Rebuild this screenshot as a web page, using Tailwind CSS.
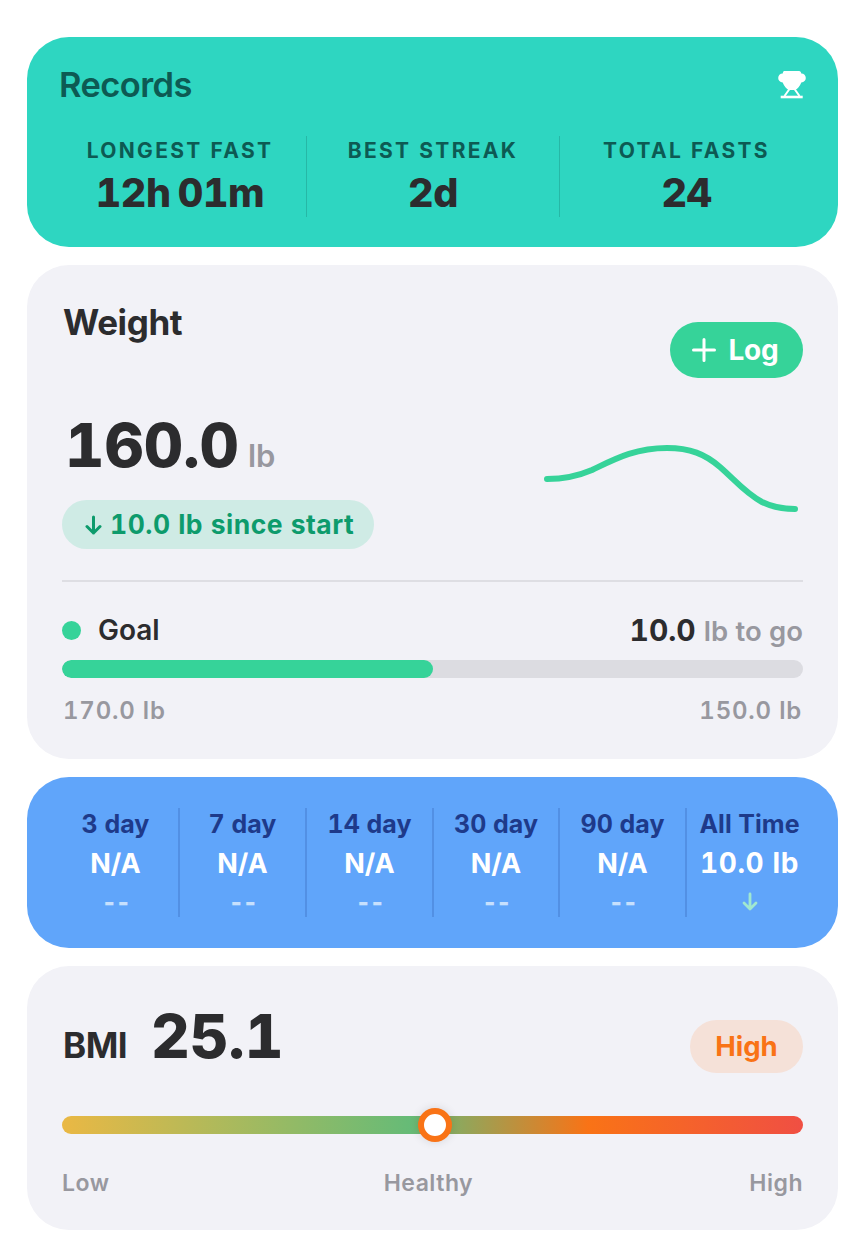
<!DOCTYPE html>
<html>
<head>
<meta charset="utf-8">
<script src="https://cdn.jsdelivr.net/npm/@tailwindcss/browser@4"></script>
</head>
<body class="bg-white font-['Inter',sans-serif] text-[#2c2c2e] tabular-nums">
<div class="w-[860px] h-[1246px] overflow-hidden pt-[37px] pl-[27px] flex flex-col gap-[18px]">

  <section class="w-[811px] h-[210px] rounded-[42px] bg-[#2ed6c1] flex flex-col">
    <div class="flex items-start justify-between pl-[32px] pr-[31px] pt-[29px] h-[78px]">
      <h2 class="text-[34.5px] leading-[38px] font-semibold tracking-[-0.6px] text-[#0d5a53]">Records</h2>
      <svg class="w-[30px] h-[30px] mt-[4px]" viewBox="0 0 30 30" fill="#fff">
        <path d="M7 1H22C23.5 1 24 2 24.3 3.5 27 3.5 28.8 5.5 28.8 8 28.8 10.5 27 12.3 24.3 12.5 23 16 20.5 19 18 20H12C9.5 19 7 16 5.7 12.5 3 12.3 1.2 10.5 1.2 8 1.2 5.5 3 3.5 5.7 3.5 6 2 6.5 1 7 1Z"/>
        <path d="M12.5 19 7.5 26M17.5 19l5 7" stroke="#fff" stroke-width="2" fill="none"/>
        <rect x="3.7" y="25.7" width="22" height="2.6"/>
      </svg>
    </div>
    <div class="grid grid-cols-3 w-[759px] ml-[27px] mt-[21px] h-[81px]">
      <div class="flex flex-col items-center pt-[2px] border-r border-[#0e5f58]/25">
        <span class="text-[21px] leading-[26px] font-bold tracking-[2.3px] text-[#0d5a53]">LONGEST FAST</span>
        <span class="text-[39.5px] leading-[46px] font-extrabold tracking-[-0.4px] [word-spacing:-3px] mt-[6px]">12h 01m</span>
      </div>
      <div class="flex flex-col items-center pt-[2px] border-r border-[#0e5f58]/25">
        <span class="text-[21px] leading-[26px] font-bold tracking-[2.3px] text-[#0d5a53]">BEST STREAK</span>
        <span class="text-[39.5px] leading-[46px] font-extrabold tracking-[-0.4px] mt-[6px]">2d</span>
      </div>
      <div class="flex flex-col items-center pt-[2px]">
        <span class="text-[21px] leading-[26px] font-bold tracking-[2.3px] text-[#0d5a53]">TOTAL FASTS</span>
        <span class="text-[39.5px] leading-[46px] font-extrabold tracking-[-0.4px] mt-[6px]">24</span>
      </div>
    </div>
  </section>

  <section class="w-[811px] h-[494px] rounded-[42px] bg-[#f2f2f7] px-[35px] flex flex-col relative">
    <div class="flex justify-between items-start">
      <h2 class="text-[35px] leading-[40px] font-bold tracking-[-0.4px] mt-[37px] ml-[1px]">Weight</h2>
      <button class="mt-[57px] w-[133px] h-[56px] rounded-full bg-[#36d399] text-white flex items-center justify-center gap-[12px] text-[28px] font-bold pr-[2px]">
        <svg class="w-[24px] h-[24px]" viewBox="0 0 24 24" fill="none" stroke="#fff" stroke-width="3" stroke-linecap="round"><path d="M12 1.5v21M1.5 12h21"/></svg>
        <span class="tracking-[-0.2px]">Log</span>
      </button>
    </div>
    <div class="flex justify-between mt-[16px] h-[125px]">
      <div class="flex flex-col">
        <div class="flex items-baseline gap-[9px] ml-[3px] h-[68px] mt-[17px]">
          <span class="text-[61px] leading-[68px] font-extrabold">160.0</span>
          <span class="text-[31px] font-semibold text-[#98989f]">lb</span>
        </div>
      </div>
      <svg class="w-[270px] h-[80px] -mr-[7px] mt-[46px] shrink-0" viewBox="0 0 270 80" fill="none" stroke="#36d399" stroke-width="6" stroke-linecap="round">
        <path d="M7 39C25 39 38 36 52 30 75 19 95 8 127 8 150 8 165 14 180 27 195 40 205 53 222 62 232 67 243 69 255 69"/>
      </svg>
    </div>
    <div class="-mt-[19px] self-start h-[49px] w-[312px] rounded-full bg-[#cfebe5] flex items-center pl-[23px] gap-[8px] text-[#0d9b6c] text-[26.5px] tracking-[0.5px] font-bold">
      <svg class="w-[17px] h-[20px]" viewBox="0 0 17 20" fill="none" stroke="#0d9b6c" stroke-width="3" stroke-linecap="round" stroke-linejoin="round"><path d="M8.5 2v16M2 11.5 8.5 18 15 11.5"/></svg>
      <span>10.0 lb since start</span>
    </div>
    <div class="h-[2px] bg-[#dedee3] mt-[31px]"></div>
    <div class="flex items-center justify-between mt-[32px] h-[32px]">
      <div class="flex items-center gap-[17px]">
        <span class="w-[19px] h-[19px] rounded-full bg-[#36d399]"></span>
        <span class="text-[28px] font-semibold">Goal</span>
      </div>
      <div class="flex items-baseline gap-[8px]">
        <span class="text-[30px] font-bold">10.0</span>
        <span class="text-[27.5px] font-semibold text-[#98989f]">lb to go</span>
      </div>
    </div>
    <div class="h-[18px] rounded-full bg-[#dcdce1] mt-[14px] overflow-hidden">
      <div class="h-full w-[50%] rounded-full bg-[#36d399]"></div>
    </div>
    <div class="flex justify-between mt-[19px] text-[24px] leading-[28px] font-semibold tracking-[0.8px] text-[#98989f] px-[1px]">
      <span>170.0 lb</span><span>150.0 lb</span>
    </div>
  </section>

  <section class="w-[811px] h-[171px] rounded-[42px] bg-[#60a5fa] pl-[26px] pt-[31px]">
    <div class="flex h-[109px]">
      <div class="w-[127px] flex flex-col items-center pt-[1px] border-r-2 border-[#1e3a8a]/20">
        <span class="text-[25px] leading-[30px] font-bold text-[#1e3a8a]">3 day</span>
        <span class="text-[27px] leading-[33px] font-bold text-white mt-[8px]">N/A</span>
        <span class="text-[24px] leading-[30px] font-extrabold tracking-[-1.5px] text-white/65 mt-[8px]">--</span>
      </div>
      <div class="w-[127px] flex flex-col items-center pt-[1px] border-r-2 border-[#1e3a8a]/20">
        <span class="text-[25px] leading-[30px] font-bold text-[#1e3a8a]">7 day</span>
        <span class="text-[27px] leading-[33px] font-bold text-white mt-[8px]">N/A</span>
        <span class="text-[24px] leading-[30px] font-extrabold tracking-[-1.5px] text-white/65 mt-[8px]">--</span>
      </div>
      <div class="w-[127px] flex flex-col items-center pt-[1px] border-r-2 border-[#1e3a8a]/20">
        <span class="text-[25px] leading-[30px] font-bold text-[#1e3a8a]">14 day</span>
        <span class="text-[27px] leading-[33px] font-bold text-white mt-[8px]">N/A</span>
        <span class="text-[24px] leading-[30px] font-extrabold tracking-[-1.5px] text-white/65 mt-[8px]">--</span>
      </div>
      <div class="w-[126px] flex flex-col items-center pt-[1px] border-r-2 border-[#1e3a8a]/20">
        <span class="text-[25px] leading-[30px] font-bold text-[#1e3a8a]">30 day</span>
        <span class="text-[27px] leading-[33px] font-bold text-white mt-[8px]">N/A</span>
        <span class="text-[24px] leading-[30px] font-extrabold tracking-[-1.5px] text-white/65 mt-[8px]">--</span>
      </div>
      <div class="w-[127px] flex flex-col items-center pt-[1px] border-r-2 border-[#1e3a8a]/20">
        <span class="text-[25px] leading-[30px] font-bold text-[#1e3a8a]">90 day</span>
        <span class="text-[27px] leading-[33px] font-bold text-white mt-[8px]">N/A</span>
        <span class="text-[24px] leading-[30px] font-extrabold tracking-[-1.5px] text-white/65 mt-[8px]">--</span>
      </div>
      <div class="w-[125px] flex flex-col items-center pt-[1px]">
        <span class="text-[25px] leading-[30px] font-bold text-[#1e3a8a] whitespace-nowrap">All Time</span>
        <span class="text-[28px] leading-[33px] font-bold text-white mt-[8px] tracking-[0.6px] whitespace-nowrap">10.0 lb</span>
        <svg class="w-[16px] h-[19px] mt-[12px]" viewBox="0 0 16 19" fill="none" stroke="#a0e8d0" stroke-width="2.8" stroke-linecap="round" stroke-linejoin="round"><path d="M8 2v15M2 11l6 6 6-6"/></svg>
      </div>
    </div>
  </section>

  <section class="w-[811px] h-[264px] rounded-[42px] bg-[#f2f2f7] px-[35px] flex flex-col">
    <div class="flex justify-between items-start">
      <div class="flex items-baseline gap-[24px] mt-[35px] ml-[1px]">
        <span class="text-[35px] font-bold tracking-[-0.5px]">BMI</span>
        <span class="text-[60px] leading-[70px] font-extrabold">25.1</span>
      </div>
      <div class="mt-[54px] w-[113px] h-[53px] rounded-full bg-[#f5e1d8] flex items-center justify-center pt-[1px] text-[#f97316] text-[27.5px] font-bold">High</div>
    </div>
    <div class="relative h-[18px] rounded-full mt-[43px] bg-[linear-gradient(90deg,#eab844_0%,#66bb77_47%,#f97316_71%,#f04f43_100%)]">
      <div class="absolute left-[356px] -top-[8px] w-[34px] h-[34px] rounded-full bg-white border-[6px] border-[#f97316] shadow-[0_0_10px_rgba(0,0,0,0.12)]"></div>
    </div>
    <div class="flex justify-between mt-[35px] text-[23px] leading-[28px] font-semibold tracking-[0.5px] text-[#98989f]">
      <span>Low</span><span class="-ml-[2px]">Healthy</span><span>High</span>
    </div>
  </section>
</div>
</body>
</html>
